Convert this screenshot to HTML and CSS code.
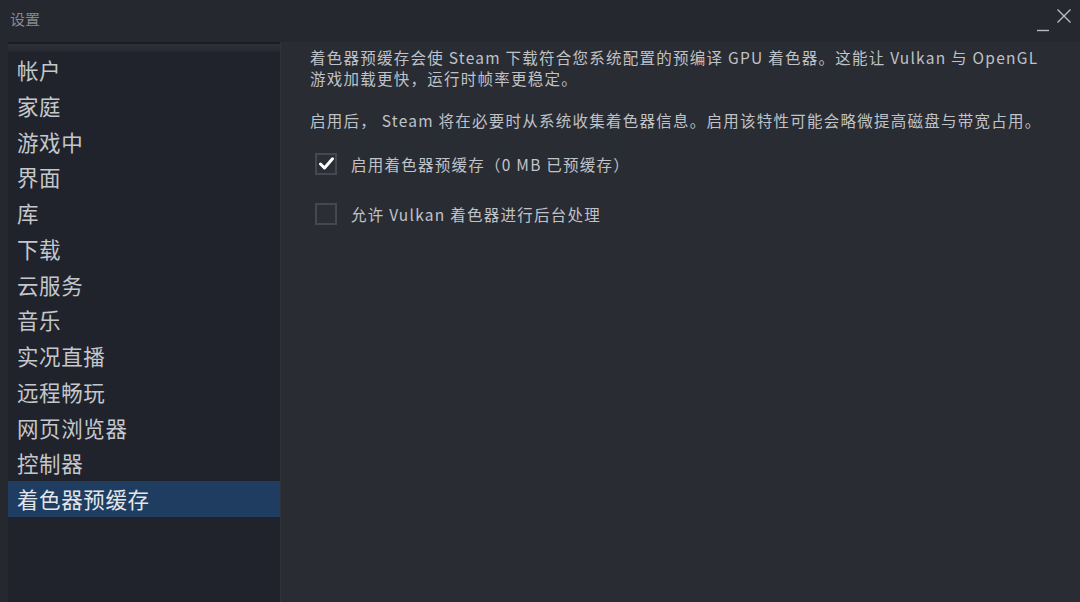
FILE: index.html
```html
<!DOCTYPE html>
<html lang="zh-CN">
<head>
<meta charset="utf-8">
<title>设置</title>
<link rel="stylesheet" href="styles.css">
</head>
<body>
<div class="window">
  <header class="titlebar">
    <span class="title">设置</span>
    <div class="controls">
      <svg class="min" width="14" height="14" viewBox="0 0 14 14"><path d="M1 12.5H13" stroke="#b9bcc1" stroke-width="1.4"/></svg>
      <svg class="close" width="16" height="16" viewBox="0 0 16 16"><path d="M1.5 1.5L14.5 14.5M14.5 1.5L1.5 14.5" stroke="#b9bcc1" stroke-width="1.4"/></svg>
    </div>
  </header>
  <div class="body">
    <nav class="sidebar">
      <div class="sidebar-top"></div>
      <ul class="nav">
        <li>帐户</li>
        <li>家庭</li>
        <li>游戏中</li>
        <li>界面</li>
        <li>库</li>
        <li>下载</li>
        <li>云服务</li>
        <li>音乐</li>
        <li>实况直播</li>
        <li>远程畅玩</li>
        <li>网页浏览器</li>
        <li>控制器</li>
        <li class="active">着色器预缓存</li>
      </ul>
    </nav>
    <main class="content">
      <p class="para">着色器预缓存会使 Steam 下载符合您系统配置的预编译 GPU 着色器。这能让 Vulkan 与 OpenGL 游戏加载更快，运行时帧率更稳定。</p>
      <p class="para">启用后， Steam 将在必要时从系统收集着色器信息。启用该特性可能会略微提高磁盘与带宽占用。</p>
      <div class="options">
        <label class="option">
          <span class="box checked">
            <svg width="15" height="13" viewBox="0 0 15 13"><path d="M1.5 7L5.5 11L13.5 1.8" fill="none" stroke="#ffffff" stroke-width="3" stroke-linejoin="round" stroke-linecap="round"/></svg>
          </span>
          <span class="label">启用着色器预缓存（0 MB 已预缓存）</span>
        </label>
        <label class="option">
          <span class="box"></span>
          <span class="label">允许 Vulkan 着色器进行后台处理</span>
        </label>
      </div>
    </main>
  </div>
</div>
</body>
</html>
```

FILE: styles.css
```css
* { box-sizing: border-box; }
html, body {
  margin: 0;
  padding: 0;
  width: 1080px;
  height: 602px;
  overflow: hidden;
  background: #25272e;
  font-family: "Noto Sans CJK SC", "Noto Sans", sans-serif;
}
.window {
  width: 1080px;
  height: 602px;
  display: flex;
  flex-direction: column;
  background: #25282f;
}
.titlebar {
  height: 42px;
  display: flex;
  justify-content: space-between;
  align-items: flex-start;
  padding: 8px 8px 0 10px;
}
.title {
  font-size: 15px;
  color: #868990;
  line-height: 22px;
}
.controls {
  display: flex;
  gap: 6px;
  align-items: flex-start;
}
.controls .min { margin-top: 10px; }
.body {
  flex: 1;
  display: flex;
  min-height: 0;
}
.sidebar {
  width: 272px;
  margin-left: 8px;
  background: #20232b;
  display: flex;
  flex-direction: column;
}
.sidebar-top {
  height: 10px;
  border-top: 2px solid #1a1c22;
  background: linear-gradient(#2e3139, #262930);
}
.nav {
  list-style: none;
  margin: 0;
  padding: 0;
}
.nav li {
  height: 35.75px;
  line-height: 35.75px;
  padding-left: 9px;
  font-size: 21.5px;
  letter-spacing: 0.6px;
  color: #c4c7cc;
  white-space: nowrap;
}
.nav li.active {
  background: #1e3d60;
  color: #e2e5e9;
}
.content {
  flex: 1;
  background: #2a2c33;
  border-left: 1px solid #30333a;
  padding: 5px 32px 0 29px;
}
.para {
  margin: 0 0 22px 0;
  font-size: 15.5px;
  line-height: 20.5px;
  letter-spacing: 1.25px;
  color: #bfc2c7;
}
.options {
  display: flex;
  flex-direction: column;
  gap: 28px;
  margin-top: 10px;
  padding-left: 5px;
}
.option {
  display: flex;
  align-items: center;
  gap: 14px;
  height: 22px;
}
.box {
  width: 22px;
  height: 22px;
  border: 2px solid #45484f;
  background: #2b2e35;
  display: flex;
  align-items: center;
  justify-content: center;
}
.label {
  font-size: 15.5px;
  letter-spacing: 1.25px;
  color: #c0c3c8;
}
```
